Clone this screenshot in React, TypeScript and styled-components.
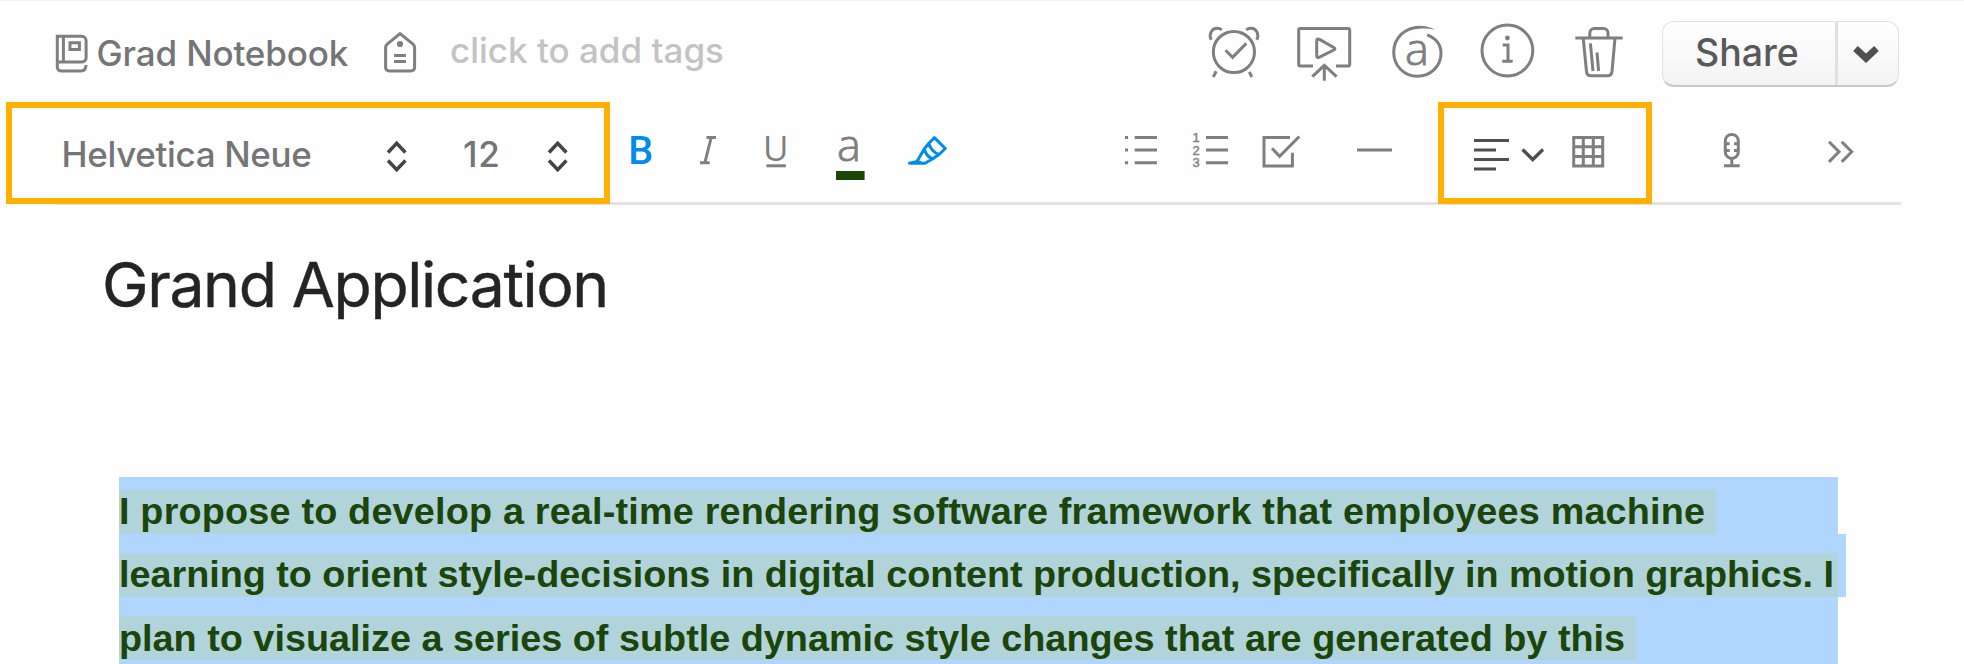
import React from 'react';
import styled, { createGlobalStyle } from 'styled-components';

const GRAY = '#7f7f7f';
const DARK = '#4f4f4f';
const BLUE = '#008ceb';
const INK = '#1c450b';
const ORANGE = '#ffb000';

const GlobalStyle = createGlobalStyle`
  *, *::before, *::after { box-sizing: border-box; }
  body { margin: 0; background: #fff; overflow: hidden; }
`;

const Page = styled.div`
  width: 1964px;
  height: 664px;
  overflow: hidden;
  background: #fefefe;
  border-top: 1px solid #f2f2f2;
  font-family: Inter, "Liberation Sans", sans-serif;
  white-space: pre;
`;

const Header = styled.header`
  display: flex;
  align-items: flex-start;
  height: 101px;
  padding: 0 65px 0 52px;
`;

const Actions = styled.div`
  display: flex;
  align-items: flex-start;
  gap: 30px;
  margin-left: auto;
`;

const Icon = styled.svg<{ $top?: number; $left?: number; $color?: string; $weight?: number }>`
  display: block;
  flex: none;
  overflow: visible;
  margin: ${p => p.$top ?? 0}px 0 0 ${p => p.$left ?? 0}px;
  fill: none;
  stroke: ${p => p.$color ?? GRAY};
  stroke-width: ${p => p.$weight ?? 3}px;
  color: ${p => p.$color ?? GRAY};
`;

const Glyph = styled.text<{ $size: number; $weight?: number; $family?: string; $outline?: number }>`
  fill: currentColor;
  stroke: ${p => (p.$outline ? 'currentColor' : 'none')};
  stroke-width: ${p => p.$outline ?? 0}px;
  font-family: ${p => p.$family ?? '"Open Sans"'}, sans-serif;
  font-size: ${p => p.$size}px;
  font-weight: ${p => p.$weight ?? 300};
`;

const ColorBar = styled.path`
  stroke: #1a4708;
  stroke-width: 9px;
`;

const Label = styled.span<{ $top: number; $left: number; $width?: number; $track?: number; $color?: string }>`
  flex: none;
  width: ${p => (p.$width ? `${p.$width}px` : 'auto')};
  margin: ${p => p.$top}px 0 0 ${p => p.$left}px;
  font-size: 35px;
  font-weight: 500;
  line-height: 43px;
  letter-spacing: ${p => p.$track ?? 0}px;
  color: ${p => p.$color ?? '#757575'};
`;

const ShareButton = styled.div`
  display: flex;
  width: 237px;
  height: 66px;
  margin: 20px 0 0 2px;
  border: 1px solid #e2e2e2;
  border-bottom: 2px solid #c9c9c9;
  border-radius: 12px;
  background: linear-gradient(#ffffff, #f3f3f3);
`;

const ShareLabel = styled.span`
  width: 172px;
  padding: 8px 0 0 32px;
  font-size: 37.5px;
  font-weight: 500;
  line-height: 46px;
  color: #595959;
`;

const ShareMenu = styled.span`
  flex: 1;
  border-left: 3px solid #e0e0e0;
`;

const Toolbar = styled.div`
  position: relative;
  display: flex;
  align-items: flex-start;
  height: 102px;
  padding-left: 6px;

  &::after {
    content: "";
    position: absolute;
    left: 56px;
    right: 63px;
    top: 100px;
    height: 3px;
    background: #e3e3e3;
  }
`;

const Frame = styled.div<{ $width: number; $left?: number }>`
  position: relative;
  z-index: 1;
  display: flex;
  align-items: flex-start;
  flex: none;
  width: ${p => p.$width}px;
  height: 102px;
  margin-left: ${p => p.$left ?? 0}px;
  border: 6px solid ${ORANGE};
`;

const Title = styled.h1`
  margin: 42px 0 0 102px;
  height: 231px;
  font-size: 62.5px;
  font-weight: 400;
  line-height: 76px;
  letter-spacing: -1.38px;
  color: #242424;
  -webkit-text-stroke: 0.4px #242424;
`;

const Note = styled.article`
  margin-left: 119px;
  width: 1719px;
  background: #b0d6ff;
  height: 190px;
`;

const Row = styled.div<{ $height: number; $extend?: number }>`
  display: flex;
  align-items: flex-end;
  height: ${p => p.$height}px;
  width: ${p => 1719 + (p.$extend ?? 0)}px;
  background: #b0d6ff;
`;

const Highlight = styled.span<{ $width: number; $track: number; $leading?: number }>`
  width: ${p => p.$width}px;
  height: 44px;
  background: #b1d4da;
  font-family: "Liberation Sans", Arial, sans-serif;
  font-size: 37.8px;
  font-weight: 700;
  line-height: ${p => p.$leading ?? 42}px;
  letter-spacing: ${p => p.$track}px;
  color: ${INK};
`;

const Stepper = ({ left }: { left: number }) => (
  <Icon width="30" height="42" $top={28} $left={left} $color="#444" $weight={3.5}>
    <path d="M6 16.5L14.7 7.2L23.4 16.5M6 24.5L14.7 33.8L23.4 24.5" />
  </Icon>
);

export default function App() {
  return (
    <Page>
      <GlobalStyle />
      <Header>
        <Icon width="40" height="46" $top={29}>
          <path d="M31 31.9H5.3V6.3H29.5a4.6 4.6 0 0 1 4.6 4.6V28a4 4 0 0 1-4 3.9M5.3 31V37a4 4 0 0 0 4 4H28.5c3.5 0 5.5-2.2 5.5-6M11.4 6.3V31.9M18 12.7h9.4v6.7H18z" />
        </Icon>
        <Label $top={31} $left={4.5} $width={260} $track={-0.15}>Grad Notebook</Label>
        <Icon width="40" height="48" $top={27} $left={23.5}>
          <path d="M20 5.6L33 16.2q1.6 1.3 1.6 3V39.5a3.6 3.6 0 0 1-3.6 3.6H9.2a3.6 3.6 0 0 1-3.6-3.6V19.2q0-1.7 1.6-3zM14 27.4H26M14 33.6H26" />
          <circle cx="20" cy="16" r="3.1" fill={GRAY} stroke="none" />
        </Icon>
        <Label $top={28} $left={30} $color="#c3c3c3">click to add tags</Label>
        <Actions>
          <Icon width="60" height="64" $top={19}>
            <circle cx="29.9" cy="32" r="20.6" />
            <path d="M21.5 30.2L28.6 37.3L42.3 23.4M7.3 19.7C4.2 14 8 8.3 13 8.3c2 0 3.6.6 4.7 1.8M52.7 19.7C55.8 14 52 8.3 47 8.3c-2 0-3.6.6-4.7 1.8M12.2 51.2L9.2 57M45.3 52L47.9 57" />
          </Icon>
          <Icon width="64" height="64" $top={19}>
            <path d="M19 46.1H6.2a1.5 1.5 0 0 1-1.5-1.5V9.9a1.5 1.5 0 0 1 1.5-1.5H54.2a1.5 1.5 0 0 1 1.5 1.5V44.6a1.5 1.5 0 0 1-1.5 1.5H42M30.3 45.5V60.7M18.3 56.6L30.3 45.3L42.6 56.6" />
            <path strokeLinejoin="round" d="M22.7 21v14.5q0 3 2.8 1.7L39.8 30q2.2-1.2 0-2.5L25.5 19.4q-2.8-1.3-2.8 1.6z" />
          </Icon>
          <Icon width="60" height="64" $top={19}>
            <path d="M39.2 14.8C48 18.3 53 25 53 33.2C53 46.2 42.5 56.2 29.3 56.2C16 56.2 5.7 45.5 5.7 32.2C5.7 18.2 17 7.2 31.5 7.2" />
            <path d="M31 5.7C37 5.7 42 7 47.5 9.7C42 8.6 37 8.3 31 8.7z" fill={GRAY} stroke="none" />
            <Glyph x="17" y="44.7" $size={45} $outline={0.9}>a</Glyph>
          </Icon>
          <Icon width="60" height="64" $top={19}>
            <circle cx="29.4" cy="30.5" r="25.4" />
            <circle cx="29.4" cy="18" r="2.4" fill={GRAY} stroke="none" />
            <path d="M24.7 25H30V41M24.3 41.2H34.7" />
          </Icon>
          <Icon width="60" height="64" $top={19} $left={2}>
            <path d="M5.3 18H52.7M19.8 18V13a4.5 4.5 0 0 1 4.5-4.5h9.2a4.5 4.5 0 0 1 4.5 4.5v5M13.2 18L16.5 51.5q.4 4.3 4.5 4.3H37.5q4 0 4.5-4.3L45 18M20.4 23.3L23 51M27 32.5L28.6 51" />
          </Icon>
          <ShareButton>
            <ShareLabel>Share</ShareLabel>
            <ShareMenu>
              <Icon width="60" height="60" $color={DARK} $weight={6.8}>
                <path d="M17.5 26.5L28 36.3L38.5 26.5" />
              </Icon>
            </ShareMenu>
          </ShareButton>
        </Actions>
      </Header>

      <Toolbar>
        <Frame $width={604}>
          <Label $top={25} $left={49.5} $width={259.5} $track={-0.35}>Helvetica Neue</Label>
          <Stepper left={61} />
          <Label $top={25} $left={51} $width={60} $track={0.8}>12</Label>
          <Stepper left={20} />
        </Frame>
        <Icon width="40" height="56" $top={24} $left={15} $color={BLUE}>
          <Glyph x="3.2" y="38" $size={39.5} $weight={500} $family="Roboto">B</Glyph>
        </Icon>
        <Icon width="40" height="56" $top={24} $left={25}>
          <path d="M16.5 11.5H26M10 36.7H19.7M21.2 11.5L14.9 36.7" />
        </Icon>
        <Icon width="40" height="56" $top={24} $left={26}>
          <Glyph x="7" y="35" $size={35} $weight={400}>U</Glyph>
          <path d="M10.5 39.8H29.8" />
        </Icon>
        <Icon width="40" height="56" $top={24} $left={36}>
          <Glyph x="5" y="35" $size={45} $outline={0.9}>a</Glyph>
          <ColorBar d="M4 49.5H32.6" />
        </Icon>
        <Icon width="48" height="56" $top={24} $left={32} $color={BLUE} strokeLinejoin="round">
          <path d="M30.3 11.7L41.4 22.5L35 28.5C30.5 27.5 25.5 22 24.9 17.3zM24.9 17.3L20.2 23L13 35.5L5.5 37.2H21L28.8 32.7L35 28.5M20.2 23C21.5 27.5 24.5 31.5 28.8 32.7M13.5 35L17.5 37" />
        </Icon>

        <Icon width="40" height="56" $top={24} $left={168}>
          <path d="M5 11.4h3M5 24h3M5 36.7h3M14.7 11.4H37M14.7 24H37M14.7 36.7H37" />
        </Icon>
        <Icon width="44" height="56" $top={24} $left={28}>
          <Glyph x="4.5" y="16" $size={13} $weight={400} $outline={0.4} $family='"Liberation Sans"'>1</Glyph>
          <Glyph x="4.5" y="28.6" $size={13} $weight={400} $outline={0.4} $family='"Liberation Sans"'>2</Glyph>
          <Glyph x="4.5" y="41.3" $size={13} $weight={400} $outline={0.4} $family='"Liberation Sans"'>3</Glyph>
          <path d="M18 11.4H40M18 24H40M18 36.7H40" />
        </Icon>
        <Icon width="44" height="56" $top={24} $left={26}>
          <path d="M32 11.4H6V40H34.4V26.7M14 22.3L21.6 30.3L41.3 10.5" />
        </Icon>
        <Icon width="44" height="56" $top={24} $left={51}>
          <path d="M4 24H39" />
        </Icon>

        <Frame $width={214} $left={41}>
          <Icon width="44" height="56" $top={18} $left={26} $color={DARK}>
            <path d="M4 14.5H39M4 24H26M4 33.5H39M4 43H26" />
          </Icon>
          <Icon width="30" height="56" $top={18} $left={4} $color={DARK} $weight={3.4}>
            <path d="M4.5 23.5L14.7 33.5L25 23.5" />
          </Icon>
          <Icon width="40" height="56" $top={18} $left={20}>
            <path d="M5.7 11.4H34.7V40H5.7zM15.3 11.4V40M25.3 11.4V40M5.7 20.7H34.7M5.7 30.4H34.7" />
          </Icon>
        </Frame>

        <Icon width="36" height="56" $top={24} $left={63}>
          <rect x="10.3" y="8.4" width="13" height="24" rx="6.5" />
          <path d="M16.8 32.4V40M9 39.8H24.7M10.3 17.7H14.7M19 17.7H23.3M10.3 24.5H14.7M19 24.5H23.3" />
        </Icon>
        <Icon width="36" height="56" $top={24} $left={73}>
          <path d="M5 15.7L15 25.7L5 35.9M17.7 15.7L27.7 25.7L17.7 35.9" />
        </Icon>
      </Toolbar>

      <Title>Grand Application</Title>
      <Note>
        <Row $height={57}>
          <Highlight $width={1597} $track={0.18}>I propose to develop a real-time rendering software framework that employees machine </Highlight>
        </Row>
        <Row $height={63} $extend={8}>
          <Highlight $width={1719} $track={-0.03}>learning to orient style-decisions in digital content production, specifically in motion graphics. I</Highlight>
        </Row>
        <Row $height={63}>
          <Highlight $width={1517} $track={0} $leading={44}>plan to visualize a series of subtle dynamic style changes that are generated by this </Highlight>
        </Row>
      </Note>
    </Page>
  );
}
